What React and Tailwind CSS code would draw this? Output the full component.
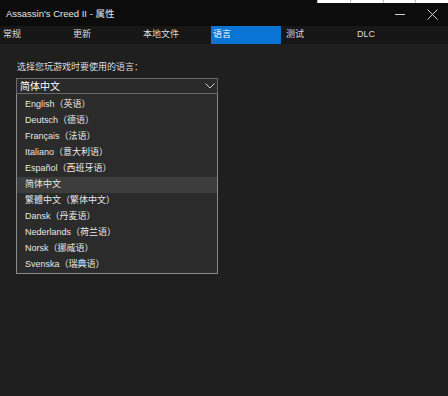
import React from "react";

const tabs = [
  { label: "常规", w: "w-[70px]", pl: "pl-[2px]" },
  { label: "更新", w: "w-[70px]", pl: "pl-[2px]" },
  { label: "本地文件", w: "w-[70px]", pl: "pl-[2px]" },
  { label: "语言", w: "w-[70px]", pl: "pl-[2px]" },
  { label: "测试", w: "w-[71px]", pl: "pl-[5px]" },
  { label: "DLC", w: "w-[71px]", pl: "pl-[5px]" },
];

const languages = [
  "English（英语）",
  "Deutsch（德语）",
  "Français（法语）",
  "Italiano（意大利语）",
  "Español（西班牙语）",
  "简体中文",
  "繁體中文（繁体中文）",
  "Dansk（丹麦语）",
  "Nederlands（荷兰语）",
  "Norsk（挪威语）",
  "Svenska（瑞典语）",
];

const App = () => {
  return (
    <div
      className="w-[448px] h-[396px] bg-[#1f1f1f] flex flex-col overflow-hidden text-[9px]"
      style={{ fontFamily: '"Liberation Sans", "Noto Sans CJK SC", sans-serif' }}
    >
      {/* Title bar */}
      <div className="relative h-[26px] bg-[#0c0c0c] flex items-center pl-[6px] pt-[3px] text-[#e6e6e6]">
        <div className="absolute top-0 left-[317px] right-0 h-[3px] bg-white flex">
          {[0, 1, 2, 3].map((i) => (
            <div key={i} className="w-[33px] h-full border-l border-[#9cc3ea]" />
          ))}
        </div>
        <span className="flex-1 text-[9.5px]">Assassin's Creed II - 属性</span>
        <div className="flex items-center h-full">
          <div className="w-[32px] h-full flex items-center justify-center">
            <div className="w-[10px] h-px bg-[#cfcfcf]" />
          </div>
          <div className="w-[32px] h-full flex items-center justify-center">
            <svg width="11" height="11" viewBox="0 0 11 11">
              <path d="M0.5 0.5 L10.5 10.5 M10.5 0.5 L0.5 10.5" stroke="#cfcfcf" strokeWidth="1" />
            </svg>
          </div>
        </div>
      </div>

      {/* Tab bar */}
      <div className="h-[18px] bg-[#171717] flex pl-[1px]">
        {tabs.map((t, i) => (
          <div
            key={t.label}
            className={`${t.w} ${t.pl} h-full flex items-center ${
              i === 3 ? "bg-[#0a74d4] text-white" : "text-[#dcdcdc]"
            }`}
          >
            {t.label}
          </div>
        ))}
      </div>

      {/* Content */}
      <div className="pl-[16px] pt-[16px]">
        <div className="pl-[1px] text-[#dedede] leading-[14px]">选择您玩游戏时要使用的语言：</div>
        <div className="mt-[4px] w-[202px]">
          <div className="h-[16px] border border-[#6a6a6a] bg-[#2a2a2a] flex items-center justify-between pl-[3px] pr-[2px] text-white text-[10px]">
            <span>简体中文</span>
            <svg width="10" height="6" viewBox="0 0 10 6">
              <path d="M0.5 0.5 L5 5 L9.5 0.5" stroke="#cfcfcf" fill="none" strokeWidth="1" />
            </svg>
          </div>
          <div className="border border-[#8a8a8a] border-t-0 bg-[#2b2b2b] pt-[3px]">
            {languages.map((l) => (
              <div
                key={l}
                className={`h-[16px] flex items-center pl-[8px] text-[#e8e8e8] ${
                  l === "简体中文" ? "bg-[#3d3d3d]" : ""
                }`}
              >
                {l}
              </div>
            ))}
          </div>
        </div>
      </div>
    </div>
  );
};

export default App;
